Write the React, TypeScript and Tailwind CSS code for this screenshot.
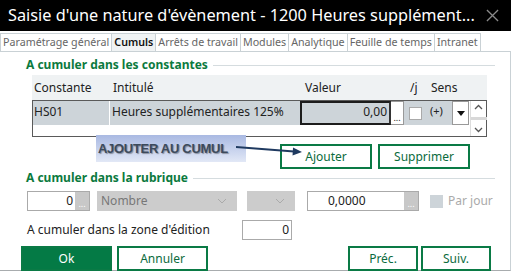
import React from 'react';

const font = { fontFamily: '"Noto Sans", "Open Sans", Arial, sans-serif' };

const tabs = ['Paramétrage général', 'Cumuls', 'Arrêts de travail', 'Modules', 'Analytique', 'Feuille de temps', 'Intranet'];

const GroupTitle = ({ label }: { label: string }) => (
  <div className="flex items-center pl-[26px] pr-[15px] h-[14px]">
    <span className="text-[12px] font-bold text-[#0b7a3e] leading-none">{label}</span>
    <div className="flex-1 h-px bg-[#d5dcdf] ml-[5px]" />
  </div>
);

const GreenButton = ({ label, w, filled }: { label: string; w: string; filled?: boolean }) => (
  <button
    className={`${w} h-[25px] border-2 border-[#0a7a45] text-[12px] leading-none flex items-center justify-center ${
      filled ? 'bg-[#047a45] text-white' : 'bg-white text-[#0a6b3d]'
    }`}
  >
    {label}
  </button>
);

const Dots = ({ cls }: { cls: string }) => (
  <div className={`${cls} flex items-end justify-center text-[9px] leading-[10px] pb-px`}>...</div>
);

export default function App() {
  return (
    <div className="w-[511px] h-[272px] bg-white overflow-hidden relative text-[#222]" style={font}>
      {/* Title bar */}
      <div className="h-[31px] bg-black flex items-center pl-[8px] pr-[12px]">
        <span className="text-white text-[16.3px] leading-none flex-1 whitespace-nowrap">
          Saisie d'une nature d'évènement - 1200 Heures supplément...
        </span>
        <svg width="13" height="13" viewBox="0 0 14 14" className="ml-2">
          <path d="M1 1L13 13M13 1L1 13" stroke="#8a8a8a" strokeWidth="1.4" />
        </svg>
      </div>

      {/* Tabs */}
      <div className="mt-[2px] flex h-[18px] pl-px">
        {tabs.map((t) => (
          <div
            key={t}
            className={`border border-b-0 border-[#c9d1d5] px-[2px] text-[10.7px] leading-[17px] whitespace-nowrap -ml-px ${
              t === 'Cumuls' ? 'bg-[#f0f3f4] text-[#111] font-semibold' : 'text-[#666]'
            }`}
          >
            {t}
          </div>
        ))}
      </div>

      {/* Panel */}
      <div className="h-[220px] border-t border-r border-[#c9d1d5] border-b border-b-[#a8acae] pt-[6px]">
        <GroupTitle label="A cumuler dans les constantes" />

        {/* Grid */}
        <div className="ml-[32px] w-[455px] mt-[3px]">
          <div className="h-[25px] bg-[#eff2f3] flex items-center text-[12px] relative">
            <span className="absolute left-[2px]">Constante</span>
            <span className="absolute left-[81px]">Intitulé</span>
            <span className="absolute left-[273px]">Valeur</span>
            <span className="absolute left-[378px]">/j</span>
            <span className="absolute left-[399px]">Sens</span>
          </div>
          <div className="h-[37px] border border-[#5a5a5a] flex">
            <div className="flex-1 flex flex-col">
              <div className="h-[24px] flex text-[12px] leading-none">
                <div className="w-[76px] bg-[#cdd4d9] pl-px pt-[5px]">HS01</div>
                <div className="w-px bg-white" />
                <div className="w-[190px] bg-[#cdd4d9] pl-[2px] pt-[5px] whitespace-nowrap">Heures supplémentaires 125%</div>
                <div className="w-[91px] bg-[#cdd4d9] border-2 border-[#1c1c1c] border-r-[#333] text-right pr-[2px] pt-[3px]">0,00</div>
                <Dots cls="w-[13px] bg-white border border-[#999] border-l-0" />
                <div className="w-[24px] bg-[#cdd4d9] flex items-center pl-[5px]">
                  <div className="w-[13px] h-[13px] bg-white border border-[#aaa]" />
                </div>
                <div className="w-[24px] bg-[#cdd4d9] pl-[2px] pt-[4px] text-[11px]">(+)</div>
                <div className="w-[17px] bg-white border border-[#999] flex items-center justify-center">
                  <svg width="8" height="5" viewBox="0 0 8 5"><path d="M0 0H8L4 5Z" fill="#111" /></svg>
                </div>
              </div>
            </div>
            <div className="w-[16px] bg-white flex flex-col items-center justify-between py-[3px] border-l border-[#ddd]">
              <svg width="9" height="6" viewBox="0 0 9 6"><path d="M1 5L4.5 1.5L8 5" stroke="#555" strokeWidth="1.3" fill="none" /></svg>
              <div className="w-[16px] h-[3px] bg-[#d8d8d8]" />
              <svg width="9" height="6" viewBox="0 0 9 6"><path d="M1 1L4.5 4.5L8 1" stroke="#555" strokeWidth="1.3" fill="none" /></svg>
            </div>
          </div>
        </div>

        {/* Ajouter / Supprimer */}
        <div className="flex gap-[6px] ml-[280px] mt-[7px]">
          <GreenButton label="Ajouter" w="w-[92px]" />
          <GreenButton label="Supprimer" w="w-[92px]" />
        </div>

        <div className="mt-[2px]">
          <GroupTitle label="A cumuler dans la rubrique" />
        </div>

        {/* Rubrique row */}
        <div className="flex items-center mt-[6px] h-[20px] text-[12px]">
          <div className="ml-[27px] w-[63px] h-[20px] border border-[#aaa] flex items-center">
            <span className="flex-1 text-right pr-[2px]">0</span>
            <Dots cls="w-[14px] h-[18px] bg-[#c8c8c8] text-white" />
          </div>
          <div className="ml-[7px] w-[140px] h-[20px] bg-[#cccccc] flex items-center pl-[4px] text-[#777]">
            <span className="flex-1">Nombre</span>
            <svg width="10" height="6" viewBox="0 0 10 6" className="mr-[10px]"><path d="M1 1L5 5L9 1" stroke="#aaa" fill="none" /></svg>
          </div>
          <div className="ml-[10px] w-[48px] h-[20px] bg-[#cccccc] flex items-center justify-end">
            <svg width="10" height="6" viewBox="0 0 10 6" className="mr-[10px]"><path d="M1 1L5 5L9 1" stroke="#aaa" fill="none" /></svg>
          </div>
          <div className="ml-[12px] w-[112px] h-[20px] border border-[#aaa] flex items-center">
            <span className="flex-1 pl-[20px]">0,0000</span>
            <Dots cls="w-[14px] h-[18px] bg-[#c8c8c8] text-white" />
          </div>
          <div className="ml-[11px] w-[13px] h-[13px] bg-[#cdd4d9]" />
          <span className="ml-[5px] text-[#aaa]">Par jour</span>
        </div>

        {/* Zone d'édition */}
        <div className="flex items-center mt-[9px] h-[20px] text-[12px]">
          <span className="ml-[27px] w-[215px]">A cumuler dans la zone d'édition</span>
          <div className="w-[50px] h-[20px] border border-[#aaa] text-right pr-[2px] leading-[18px]">0</div>
        </div>

        {/* Bottom buttons */}
        <div className="flex mt-[6px] ml-[21px]">
          <GreenButton label="Ok" w="w-[91px]" filled />
          <div className="ml-[5px]"><GreenButton label="Annuler" w="w-[91px]" /></div>
          <div className="ml-[140px]"><GreenButton label="Préc." w="w-[70px]" /></div>
          <div className="ml-[3px]"><GreenButton label="Suiv." w="w-[70px]" /></div>
        </div>
      </div>

      {/* Annotation overlay */}
      <div className="absolute left-[96px] top-[135px] w-[150px] h-[27px] bg-gradient-to-b from-[#a9b9e2] to-[#e2e8f6] flex items-center pl-[2px]">
        <span
          className="text-[13px] font-bold text-[#3c4a5c] tracking-[-0.3px]"
          style={{ fontFamily: '"Liberation Sans", Arial, sans-serif', textShadow: '1px 1px 1px rgba(0,0,0,0.35)' }}
        >
          AJOUTER AU CUMUL
        </span>
      </div>
      <svg className="absolute left-[236px] top-[142px]" width="70" height="16" viewBox="0 0 70 16">
        <path d="M0 5L58 9.5" stroke="#1f3a60" strokeWidth="2" />
        <path d="M57 5.5L66 10L56.5 13.5Z" fill="#1f3a60" />
      </svg>
    </div>
  );
}
